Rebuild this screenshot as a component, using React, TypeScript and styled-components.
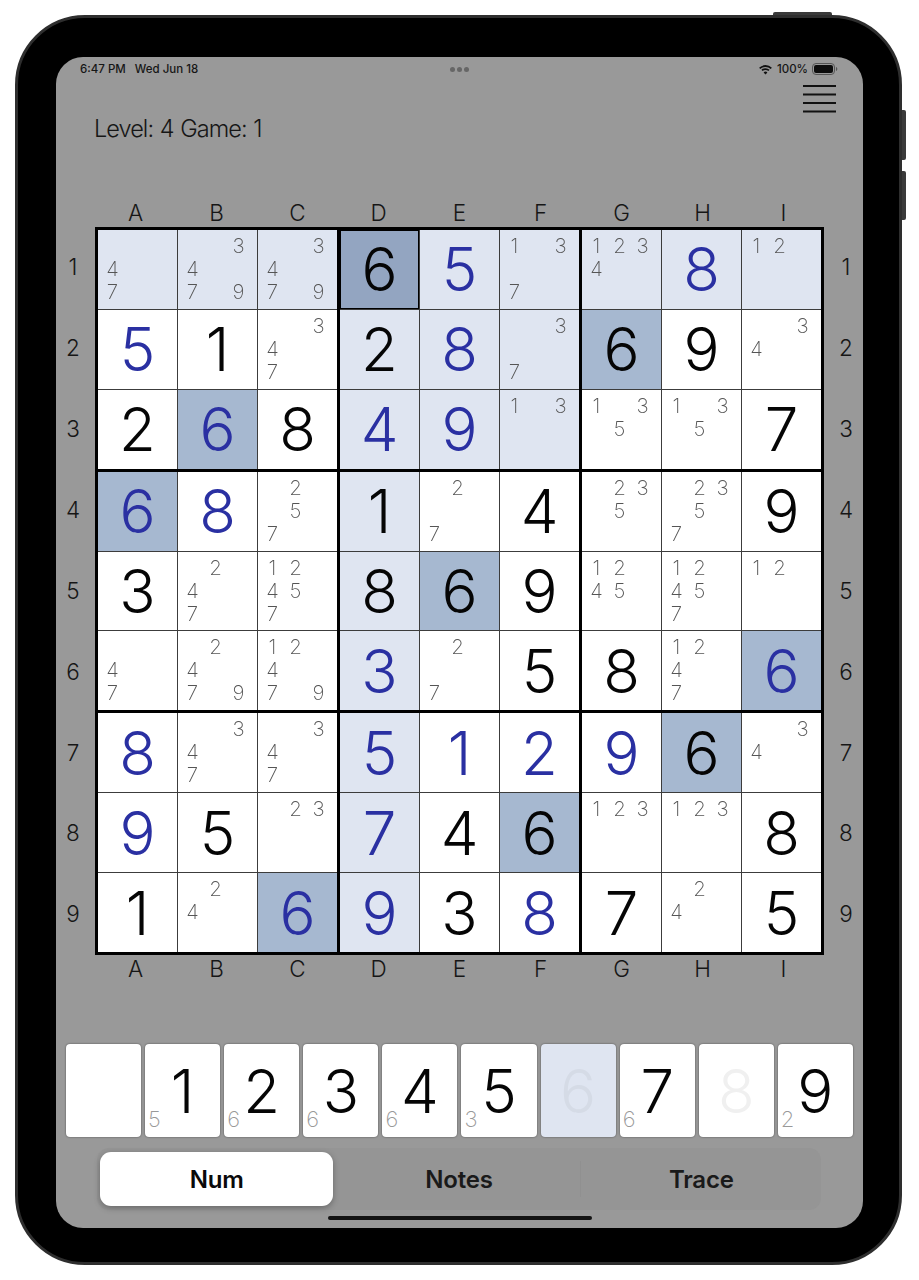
import React from "react";
import styled, { createGlobalStyle } from "styled-components";

const FONT = `Inter, "Noto Sans", "Liberation Sans", sans-serif`;

const GlobalStyle = createGlobalStyle`
  html, body {
    margin: 0;
    padding: 0;
    background: #fff;
    font-family: ${FONT};
  }
  * { box-sizing: border-box; }
`;

const COLORS = {
  screen: "#999999",
  light: "#dfe5f1",
  match: "#a6b8d0",
  selected: "#93a5c1",
  blue: "#2a30a2",
  ink: "#050505",
  note: "#555555",
};

const Page = styled.div`
  width: 919px;
  height: 1280px;
  padding: 15px 17px 15px 15px;
  background: #fff;
`;

const Device = styled.div`
  position: relative;
  width: 887px;
  height: 1250px;
  padding: 39px 36px 34px 38px;
  background: #000;
  border: 3px solid #2e2e2e;
  border-radius: 70px;
`;

const HardwareButton = styled.span<{ $side: "top" | "right"; $offset: number; $length: number }>`
  position: absolute;
  background: #3a3a3a;
  ${(p) =>
    p.$side === "top"
      ? `top: -6px; left: ${p.$offset}px; width: ${p.$length}px; height: 3px; border-radius: 2px 2px 0 0;`
      : `right: -7px; top: ${p.$offset}px; width: 4px; height: ${p.$length}px; border-radius: 0 2px 2px 0;`}
`;

const Screen = styled.div`
  display: flex;
  flex-direction: column;
  width: 807px;
  height: 1171px;
  background: ${COLORS.screen};
  border-radius: 27px;
  overflow: hidden;
`;

const StatusBar = styled.div`
  display: grid;
  grid-template-columns: 1fr auto 1fr;
  align-items: center;
  height: 24px;
  padding: 0 25px 0 24px;
  font-size: 11.5px;
  font-weight: 500;
  color: #161616;
`;

const StatusLeft = styled.div`
  display: flex;
  gap: 9px;
`;

const StatusDots = styled.div`
  display: flex;
  gap: 2px;
`;

const Dot = styled.span`
  width: 5px;
  height: 5px;
  border-radius: 50%;
  background: #666;
`;

const StatusRight = styled.div`
  display: flex;
  justify-content: flex-end;
  align-items: center;
  gap: 4px;
`;

const Header = styled.div`
  display: flex;
  justify-content: space-between;
  align-items: flex-start;
  height: 119px;
  padding: 4px 27px 0 38px;
`;

const LevelText = styled.div`
  margin-top: 30px;
  font-size: 23.5px;
  font-weight: 300;
  line-height: 28px;
  letter-spacing: -0.95px;
  word-spacing: 1px;
  color: #161616;
`;

const ColumnLabels = styled.div<{ $height: number }>`
  display: grid;
  grid-template-columns: repeat(9, 1fr);
  width: 729px;
  height: ${(p) => p.$height}px;
  margin-left: 39px;
`;

const Label = styled.div`
  display: flex;
  align-items: center;
  justify-content: center;
  font-size: 22.5px;
  font-weight: 300;
  line-height: 1;
  color: #161616;
`;

const BoardRow = styled.div`
  display: grid;
  grid-template-columns: 39px 729px 39px;
`;

const RowLabels = styled.div<{ $side: "left" | "right" }>`
  display: grid;
  grid-template-rows: repeat(9, 1fr);
  padding: ${(p) => (p.$side === "left" ? "0 5px 0 0" : "0 0 0 5px")};
`;

const Board = styled.div`
  display: grid;
  grid-template-columns: repeat(3, 1fr);
  grid-template-rows: repeat(3, 1fr);
  gap: 3px;
  width: 729px;
  height: 728px;
  background: #000;
  border: 3px solid #000;
`;

const Box = styled.div`
  display: grid;
  grid-template-columns: repeat(3, 1fr);
  grid-template-rows: repeat(3, 1fr);
  gap: 1px;
  background: #3c3c3c;
`;

type Tone = "plain" | "light" | "match" | "selected";

const toneColor: Record<Tone, string> = {
  plain: "#ffffff",
  light: COLORS.light,
  match: COLORS.match,
  selected: COLORS.selected,
};

const Cell = styled.div<{ $tone: Tone }>`
  display: flex;
  align-items: center;
  justify-content: center;
  min-width: 0;
  min-height: 0;
  background: ${(p) => toneColor[p.$tone]};
  box-shadow: ${(p) => (p.$tone === "selected" ? "inset 0 0 0 1px #000" : "none")};
`;

const BigDigit = styled.span<{ $given: boolean }>`
  font-size: 60px;
  font-weight: 280;
  line-height: 1;
  color: ${(p) => (p.$given ? COLORS.ink : COLORS.blue)};
`;

const Notes = styled.div`
  display: grid;
  grid-template-columns: repeat(3, 23px);
  grid-template-rows: repeat(3, 23px);
  width: 100%;
  height: 100%;
  padding: 4px 0 0 3px;
  will-change: transform;
`;

const Note = styled.span`
  display: flex;
  align-items: center;
  justify-content: center;
  font-size: 20.5px;
  font-weight: 250;
  color: ${COLORS.note};
`;

const Keys = styled.div`
  display: flex;
  gap: 4px;
  margin-top: auto;
  padding: 0 10px;
`;

const Key = styled.div<{ $active?: boolean }>`
  position: relative;
  display: flex;
  flex: 1;
  align-items: center;
  justify-content: center;
  height: 93px;
  background: ${(p) => (p.$active ? COLORS.light : "#fff")};
  border-radius: 4px;
  box-shadow: 0 0 2px rgba(0, 0, 0, 0.55);
`;

const KeyDigit = styled.span<{ $tone: "normal" | "faded" | "done" }>`
  font-size: 60px;
  font-weight: 280;
  line-height: 1;
  color: ${(p) =>
    p.$tone === "normal" ? COLORS.ink : p.$tone === "faded" ? "#d5dbe6" : "#f0f0f0"};
`;

const KeyCount = styled.span`
  position: absolute;
  left: 3px;
  bottom: 6px;
  font-size: 22px;
  font-weight: 250;
  line-height: 24px;
  color: #999;
`;

const Segments = styled.div`
  display: flex;
  align-items: center;
  height: 62px;
  margin: 11px 42px 0 41px;
  padding: 4px 3px;
  background: #959595;
  border-radius: 12px;
`;

const Segment = styled.div<{ $on?: boolean }>`
  display: flex;
  flex: 1;
  align-items: center;
  justify-content: center;
  height: 54px;
  font-size: 24px;
  font-weight: 600;
  letter-spacing: -0.2px;
  color: ${(p) => (p.$on ? "#0a0a0a" : "#1a1a1a")};
  background: ${(p) => (p.$on ? "#fff" : "transparent")};
  border-radius: 11px;
  box-shadow: ${(p) => (p.$on ? "0 2px 6px rgba(0, 0, 0, 0.3)" : "none")};
`;

const Divider = styled.span<{ $visible: boolean }>`
  flex: none;
  width: 1px;
  height: 36px;
  margin: 0 4px;
  background: ${(p) => (p.$visible ? "#909090" : "transparent")};
`;

const HomeIndicator = styled.div`
  flex: none;
  width: 264px;
  height: 4px;
  margin: 6px auto 8px;
  background: #141414;
  border-radius: 2px;
`;

const MenuIcon = () => (
  <svg width="33" height="29" viewBox="0 0 33 29" fill="none" stroke="#111" strokeWidth="2.2">
    <path d="M0 1h33M0 9.5h33M0 18h33M0 26.500h33" />
  </svg>
);

const WifiIcon = () => (
  <svg width="15" height="11" viewBox="0 0 15 11" fill="#111">
    <path d="M7.500 2.900c2 0 3.800.8 5.200 2.100l1.200-1.300A9.300 9.300 0 0 0 7.500 1 9.300 9.300 0 0 0 1.100 3.700L2.300 5a7.500 7.500 0 0 1 5.200-2.100z" />
    <path d="M7.500 6c1.100 0 2.100.4 2.900 1.100l1.200-1.300a6 6 0 0 0-8.200 0l1.200 1.300C5.400 6.400 6.400 6 7.500 6z" />
    <path d="M7.500 10.600l1.900-2.100a2.800 2.800 0 0 0-3.800 0z" />
  </svg>
);

const BatteryIcon = () => (
  <svg width="26" height="12" viewBox="0 0 26 12">
    <rect x="0.500" y="0.500" width="22" height="11" rx="3.500" fill="none" stroke="#555" />
    <rect x="2" y="2" width="19" height="8" rx="2" fill="#0c0c0c" />
    <path d="M24 4v4c.8-.3 1.300-1.100 1.300-2S24.800 4.300 24 4z" fill="#555" />
  </svg>
);

// digit with g = given (black), b = entered (blue), otherwise pencil notes
const BOARD: string[][] = [
  ["47", "3479", "3479", "g6", "b5", "137", "1234", "b8", "12"],
  ["b5", "g1", "347", "g2", "b8", "37", "g6", "g9", "34"],
  ["g2", "b6", "g8", "b4", "b9", "13", "135", "135", "g7"],
  ["b6", "b8", "257", "g1", "27", "g4", "235", "2357", "g9"],
  ["g3", "247", "12457", "g8", "g6", "g9", "1245", "12457", "12"],
  ["47", "2479", "12479", "b3", "27", "g5", "g8", "1247", "b6"],
  ["b8", "347", "347", "b5", "b1", "b2", "b9", "g6", "34"],
  ["b9", "g5", "23", "b7", "g4", "g6", "123", "123", "g8"],
  ["g1", "24", "b6", "b9", "g3", "b8", "g7", "24", "g5"],
];

const SELECTED_ROW = 0;
const SELECTED_COL = 3;
const COLS = ["A", "B", "C", "D", "E", "F", "G", "H", "I"];
const NUMS = ["1", "2", "3", "4", "5", "6", "7", "8", "9"];

function toneFor(r: number, c: number): Tone {
  if (r === SELECTED_ROW && c === SELECTED_COL) return "selected";
  if (BOARD[r][c].endsWith("6") && /^[gb]/.test(BOARD[r][c])) return "match";
  const sameBox =
    Math.floor(r / 3) === Math.floor(SELECTED_ROW / 3) &&
    Math.floor(c / 3) === Math.floor(SELECTED_COL / 3);
  if (r === SELECTED_ROW || c === SELECTED_COL || sameBox) return "light";
  return "plain";
}

function BoardCell({ r, c }: { r: number; c: number }) {
  const v = BOARD[r][c];
  const isDigit = v[0] === "g" || v[0] === "b";
  return (
    <Cell $tone={toneFor(r, c)}>
      {isDigit ? (
        <BigDigit $given={v[0] === "g"}>{v[1]}</BigDigit>
      ) : (
        <Notes>
          {NUMS.map((n) => (
            <Note key={n}>{v.includes(n) ? n : ""}</Note>
          ))}
        </Notes>
      )}
    </Cell>
  );
}

const KEYS: { digit: string; count?: string; tone: "normal" | "faded" | "done"; active?: boolean }[] = [
  { digit: "", tone: "normal" },
  { digit: "1", count: "5", tone: "normal" },
  { digit: "2", count: "6", tone: "normal" },
  { digit: "3", count: "6", tone: "normal" },
  { digit: "4", count: "6", tone: "normal" },
  { digit: "5", count: "3", tone: "normal" },
  { digit: "6", tone: "faded", active: true },
  { digit: "7", count: "6", tone: "normal" },
  { digit: "8", tone: "done" },
  { digit: "9", count: "2", tone: "normal" },
];

const TRIPLE = [0, 1, 2];

export default function App() {
  return (
    <Page>
      <GlobalStyle />
      <Device>
        <HardwareButton $side="top" $offset={755} $length={59} />
        <HardwareButton $side="right" $offset={92} $length={50} />
        <HardwareButton $side="right" $offset={153} $length={49} />
        <Screen>
          <StatusBar>
            <StatusLeft>
              <span>6:47 PM</span>
              <span>Wed Jun 18</span>
            </StatusLeft>
            <StatusDots>
              <Dot />
              <Dot />
              <Dot />
            </StatusDots>
            <StatusRight>
              <WifiIcon />
              <span>100%</span>
              <BatteryIcon />
            </StatusRight>
          </StatusBar>
          <Header>
            <LevelText>Level: 4 Game: 1</LevelText>
            <MenuIcon />
          </Header>
          <ColumnLabels $height={27}>
            {COLS.map((c) => (
              <Label key={c}>{c}</Label>
            ))}
          </ColumnLabels>
          <BoardRow>
            <RowLabels $side="left">
              {NUMS.map((n) => (
                <Label key={n}>{n}</Label>
              ))}
            </RowLabels>
            <Board>
              {TRIPLE.flatMap((br) =>
                TRIPLE.map((bc) => (
                  <Box key={`${br}-${bc}`}>
                    {TRIPLE.flatMap((ir) =>
                      TRIPLE.map((ic) => (
                        <BoardCell key={`${ir}-${ic}`} r={br * 3 + ir} c={bc * 3 + ic} />
                      ))
                    )}
                  </Box>
                ))
              )}
            </Board>
            <RowLabels $side="right">
              {NUMS.map((n) => (
                <Label key={n}>{n}</Label>
              ))}
            </RowLabels>
          </BoardRow>
          <ColumnLabels $height={28}>
            {COLS.map((c) => (
              <Label key={c}>{c}</Label>
            ))}
          </ColumnLabels>
          <Keys>
            {KEYS.map((k, i) => (
              <Key key={i} $active={k.active}>
                <KeyDigit $tone={k.tone}>{k.digit}</KeyDigit>
                {k.count && <KeyCount>{k.count}</KeyCount>}
              </Key>
            ))}
          </Keys>
          <Segments>
            <Segment $on>Num</Segment>
            <Divider $visible={false} />
            <Segment>Notes</Segment>
            <Divider $visible />
            <Segment>Trace</Segment>
          </Segments>
          <HomeIndicator />
        </Screen>
      </Device>
    </Page>
  );
}
